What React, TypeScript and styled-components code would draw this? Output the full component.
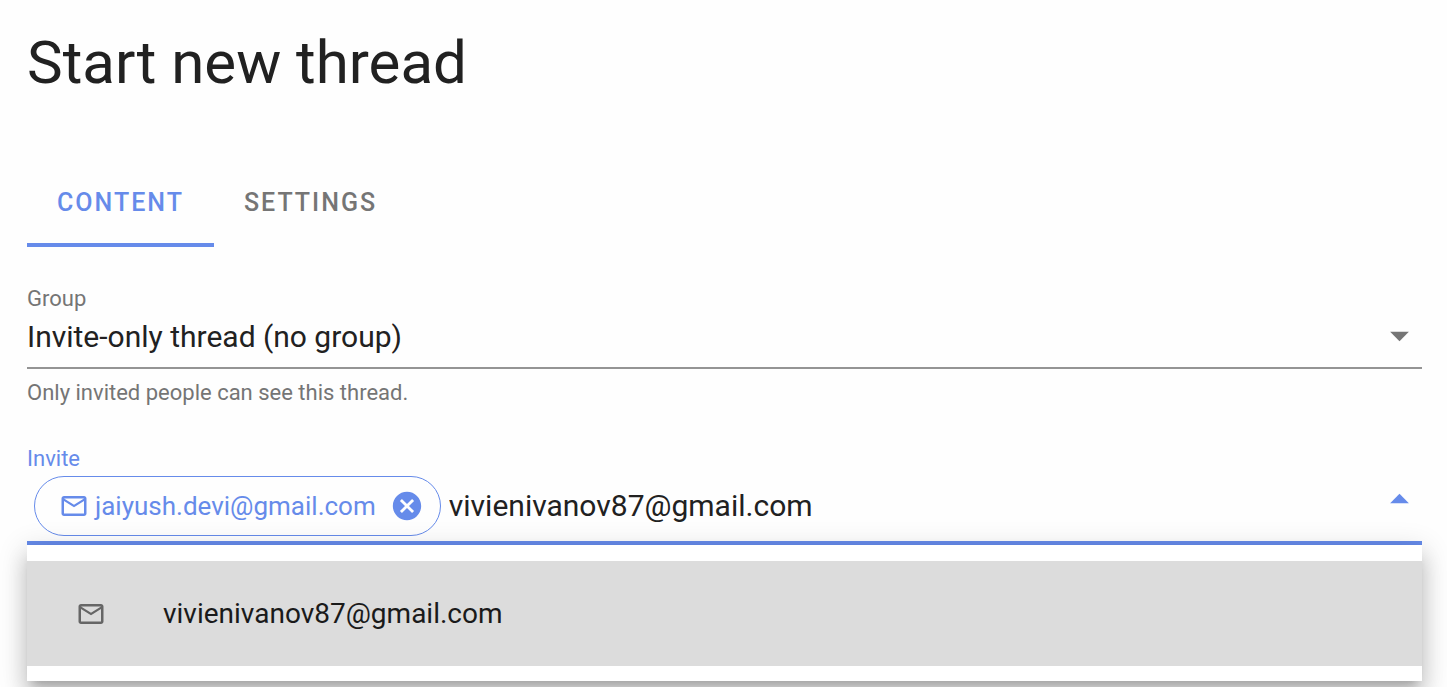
import React, { useState } from "react";
import styled, { createGlobalStyle } from "styled-components";

const primary = "#668bea";

const GlobalStyle = createGlobalStyle`
  *, *::before, *::after { box-sizing: border-box; }
  body {
    margin: 0;
    background: #fefefe;
    color: #212121;
    font-family: Roboto, "Liberation Sans", sans-serif;
    font-size: 30px;
  }
  button, input, select { font: inherit; color: inherit; letter-spacing: inherit; }
`;

const Page = styled.main`
  min-height: 100vh;
  padding: 33px 25px 0 27px;
`;

const Title = styled.h1`
  margin: 0;
  font-size: 60px;
  line-height: 60px;
  font-weight: 400;
`;

const Tabs = styled.div`
  display: flex;
  margin-top: 64px;
`;

const Tab = styled.button<{ $active: boolean }>`
  height: 90px;
  padding: 4px 30px 0;
  border: 0;
  border-bottom: 4px solid ${(p) => (p.$active ? primary : "transparent")};
  background: none;
  color: ${(p) => (p.$active ? primary : "#757575")};
  font-size: 25px;
  font-weight: 500;
  letter-spacing: 2px;
  text-transform: uppercase;
  cursor: pointer;
`;

const Field = styled.div`
  position: relative;
  margin-top: 38px;
`;

const Label = styled.label<{ $active?: boolean }>`
  display: block;
  font-size: 22px;
  line-height: 28px;
  color: ${(p) => (p.$active ? primary : "#757575")};
`;

const Control = styled.div<{ $active?: boolean }>`
  display: flex;
  align-items: center;
  border-bottom: ${(p) => (p.$active ? `4px solid ${primary}` : "2px solid #949494")};
`;

const SelectControl = styled(Control)`
  display: grid;
  height: 56px;
  align-items: start;
`;

const Select = styled.select`
  grid-area: 1 / 1;
  width: 100%;
  height: 46px;
  padding: 0;
  border: 0;
  outline: 0;
  background: none;
  appearance: none;
  cursor: pointer;
`;

const SelectArrow = styled.svg`
  grid-area: 1 / 1;
  justify-self: end;
  pointer-events: none;
  color: #757575;
`;

const Hint = styled.p`
  margin: 10px 0 0;
  font-size: 22px;
  line-height: 28px;
  color: #757575;
`;

const InviteControl = styled(Control)`
  height: 72px;
  align-items: flex-start;
  padding: 3px 0 0 7px;
`;

const Chip = styled.span`
  display: flex;
  align-items: center;
  height: 60px;
  padding: 0 16px 0 24px;
  border: 1px solid ${primary};
  border-radius: 30px;
  color: ${primary};
  font-size: 26px;
`;

const ChipText = styled.span`
  margin: 0 14px 0 6px;
  line-height: 30px;
`;

const RemoveButton = styled.button`
  display: flex;
  align-items: center;
  padding: 0;
  border: 0;
  background: none;
  cursor: pointer;
`;

const InviteInput = styled.input`
  flex: 1;
  min-width: 0;
  height: 58px;
  padding: 0 0 0 8px;
  border: 0;
  outline: 0;
  background: none;
`;

const ToggleButton = styled(RemoveButton)`
  height: 43px;
  color: ${primary};
`;

const Menu = styled.ul`
  position: absolute;
  top: 100%;
  left: 0;
  right: 0;
  margin: 0;
  padding: 16px 0 15px;
  list-style: none;
  background: #fff;
  box-shadow:
    0 9px 9px -6px rgba(0, 0, 0, 0.2),
    0 15px 19px 2px rgba(0, 0, 0, 0.14),
    0 6px 26px 4px rgba(0, 0, 0, 0.12);
`;

const Option = styled.button`
  display: flex;
  align-items: center;
  gap: 57px;
  width: 100%;
  height: 105px;
  padding: 0 49px;
  border: 0;
  background: #dcdcdc;
  color: #1a1a1a;
  font-size: 28px;
  text-align: left;
  cursor: pointer;
`;

const OptionIcon = styled.span`
  display: flex;
  color: #666;
`;

function MailIcon() {
  return (
    <svg width="30" height="30" viewBox="0 0 24 24" fill="currentColor" aria-hidden="true">
      <path d="M22 6C22 4.9 21.1 4 20 4H4C2.9 4 2 4.9 2 6V18C2 19.1 2.9 20 4 20H20C21.1 20 22 19.1 22 18V6M20 6L12 11L4 6H20M20 18H4V8L12 13L20 8V18Z" />
    </svg>
  );
}

function CloseIcon() {
  return (
    <svg width="34" height="34" viewBox="0 0 24 24" fill="currentColor" aria-hidden="true">
      <path d="M12 2C6.47 2 2 6.47 2 12S6.47 22 12 22 22 17.53 22 12 17.53 2 12 2M17 15.59L15.59 17L12 13.41L8.41 17L7 15.59L10.59 12L7 8.41L8.41 7L12 10.59L15.59 7L17 8.41L13.41 12L17 15.59Z" />
    </svg>
  );
}

export default function App() {
  const [tab, setTab] = useState("Content");
  const [email, setEmail] = useState("vivienivanov87@gmail.com");

  return (
    <>
      <GlobalStyle />
      <Page>
        <Title>Start new thread</Title>
        <Tabs role="tablist">
          {["Content", "Settings"].map((name) => (
            <Tab
              key={name}
              type="button"
              role="tab"
              aria-selected={tab === name}
              $active={tab === name}
              onClick={() => setTab(name)}
            >
              {name}
            </Tab>
          ))}
        </Tabs>

        <Field>
          <Label htmlFor="group">Group</Label>
          <SelectControl>
            <Select id="group">
              <option>Invite-only thread (no group)</option>
            </Select>
            <SelectArrow width="45" height="45" viewBox="0 0 24 24" fill="currentColor" aria-hidden="true">
              <path d="M7,10L12,15L17,10H7Z" />
            </SelectArrow>
          </SelectControl>
          <Hint>Only invited people can see this thread.</Hint>
        </Field>

        <Field>
          <Label htmlFor="invite" $active>
            Invite
          </Label>
          <InviteControl $active>
            <Chip>
              <MailIcon />
              <ChipText>jaiyush.devi@gmail.com</ChipText>
              <RemoveButton type="button" aria-label="Remove jaiyush.devi@gmail.com">
                <CloseIcon />
              </RemoveButton>
            </Chip>
            <InviteInput
              id="invite"
              type="text"
              value={email}
              onChange={(e) => setEmail(e.target.value)}
            />
            <ToggleButton type="button" aria-label="Close suggestions">
              <svg width="45" height="45" viewBox="0 0 24 24" fill="currentColor" aria-hidden="true">
                <path d="M7,15L12,10L17,15H7Z" />
              </svg>
            </ToggleButton>
          </InviteControl>
          <Menu>
            <li>
              <Option type="button">
                <OptionIcon>
                  <MailIcon />
                </OptionIcon>
                {email}
              </Option>
            </li>
          </Menu>
        </Field>
      </Page>
    </>
  );
}
